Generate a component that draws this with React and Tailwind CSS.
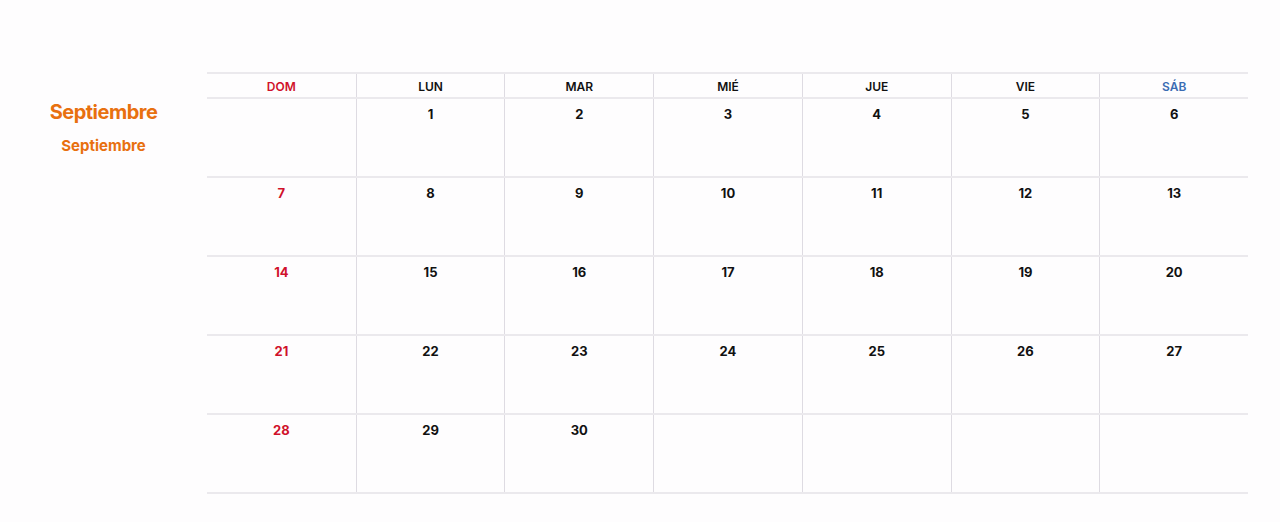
import React from "react";

const DAYS = ["DOM", "LUN", "MAR", "MIÉ", "JUE", "VIE", "SÁB"];

// September: starts on Monday, 30 days
const cells = [null, ...Array.from({ length: 30 }, (_, i) => i + 1)];
while (cells.length < 35) cells.push(null);
const weeks = Array.from({ length: 5 }, (_, w) => cells.slice(w * 7, w * 7 + 7));

function headColor(i) {
  if (i === 0) return "text-[#d0112b]";
  if (i === 6) return "text-[#3b6cb3]";
  return "text-[#111]";
}

export default function App() {
  return (
    <div className="w-[1280px] h-[522px] bg-[#fefdfe] flex font-['Inter',sans-serif]">
      <div className="w-[207px] pt-[98px] flex flex-col items-center">
        <h1 className="text-[20px] leading-[28px] font-bold text-[#e8700f] tracking-tight">Septiembre</h1>
        <h2 className="mt-[10px] text-[15px] leading-[20px] font-bold text-[#e8700f]">Septiembre</h2>
      </div>

      <div className="w-[1041px] pt-[72px]">
        <div className="grid grid-cols-7 border-t-2 border-b-2 border-[#ebe9ed] h-[27px]">
          {DAYS.map((d, i) => (
            <div
              key={d}
              className={`flex items-center justify-center pt-[3px] text-[12px] font-semibold ${headColor(i)} ${i > 0 ? "border-l border-[#dedbe2]" : ""}`}
            >
              {d}
            </div>
          ))}
        </div>
        {weeks.map((week, w) => (
          <div key={w} className="grid grid-cols-7 border-b-2 border-[#ebe9ed] h-[79px]">
            {week.map((n, i) => (
              <div
                key={i}
                className={`flex justify-center pt-[6px] text-[13px] leading-[18px] font-bold ${i === 0 ? "text-[#d0112b]" : "text-[#111]"} ${i > 0 ? "border-l border-[#dedbe2]" : ""}`}
              >
                {n}
              </div>
            ))}
          </div>
        ))}
      </div>
    </div>
  );
}
